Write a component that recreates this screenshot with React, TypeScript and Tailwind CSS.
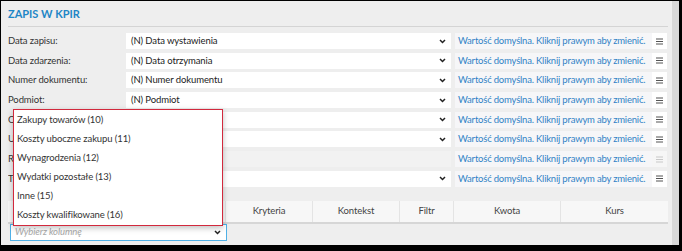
import React from "react";

const Chevron = ({ className = "" }: { className?: string }) => (
  <svg width="7" height="5" viewBox="0 0 7 5" className={className}>
    <path d="M1 1 L3.5 3.5 L6 1" fill="none" stroke="#222" strokeWidth="1.5" />
  </svg>
);

const Burger = ({ light = false }: { light?: boolean }) => (
  <svg width="7" height="7" viewBox="0 0 7 7">
    <rect x="0" y="0.5" width="7" height="1" fill={light ? "#c8c8c8" : "#555"} />
    <rect x="0" y="3" width="7" height="1" fill={light ? "#c8c8c8" : "#555"} />
    <rect x="0" y="5.5" width="7" height="1" fill={light ? "#c8c8c8" : "#555"} />
  </svg>
);

const rows = [
  { label: "Data zapisu:", value: "(N) Data wystawienia" },
  { label: "Data zdarzenia:", value: "(N) Data otrzymania" },
  { label: "Numer dokumentu:", value: "(N) Numer dokumentu" },
  { label: "Podmiot:", value: "(N) Podmiot" },
  { label: "Opis zdarzenia:", value: "" },
  { label: "Uwagi:", value: "" },
  { label: "Rodzaj:", value: "", disabled: true },
  { label: "Typ:", value: "" },
];

const items = [
  "Zakupy towarów (10)",
  "Koszty uboczne zakupu (11)",
  "Wynagrodzenia (12)",
  "Wydatki pozostałe (13)",
  "Inne (15)",
  "Koszty kwalifikowane (16)",
];

export default function App() {
  return (
    <div
      className="relative w-[682px] h-[251px] bg-black overflow-hidden"
      style={{ fontFamily: "Lato, 'Open Sans', sans-serif" }}
    >
      <div className="ml-[1px] mt-[1px] w-[678px] h-[244px] flex">
        <div className="w-[671px] shrink-0 h-full bg-[#eeeeee] pl-[7px] pr-[4px]">
          <div className="h-[26px] flex items-center pt-[2px] border-b border-[#d4d4d4]">
            <span className="text-[11px] font-bold text-[#1e86c6]">ZAPIS W KPIR</span>
          </div>
          <div className="pt-[6px] flex flex-col">
            {rows.map((r, i) => (
              <div key={i} className="h-[19.7px] flex items-start">
                <div className="w-[118px] shrink-0 h-[16px] flex items-center text-[9.5px] tracking-[-0.1px] text-[#333] whitespace-nowrap overflow-hidden">
                  {r.label}
                </div>
                <div
                  className={`w-[325px] shrink-0 h-[16px] flex items-center justify-between pl-[5px] pr-[5px] text-[9.5px] tracking-[-0.1px] text-[#222] ${
                    r.disabled ? "bg-[#f2f2f2]" : "bg-white"
                  }`}
                >
                  <span>{r.value}</span>
                  {!r.disabled && <Chevron />}
                </div>
                <div className="ml-[4px] w-[197px] shrink-0 h-[16px] flex items-center pl-[3px] bg-[#f6f6f8] text-[9.5px] tracking-[-0.2px] text-[#3183c6] whitespace-nowrap overflow-hidden">
                  Wartość domyślna. Kliknij prawym aby zmienić.
                </div>
                <div className={`w-[15px] shrink-0 h-[16px] flex items-center justify-center ${r.disabled ? "bg-[#f6f6f6]" : "bg-white"}`}>
                  <Burger light={r.disabled} />
                </div>
              </div>
            ))}
          </div>
          <div className="mt-[10px] h-[23px] flex bg-[#f7f7f7] border-b-2 border-[#d6d6d6] text-[9.5px] tracking-[-0.1px] text-[#444]">
            <div className="w-[218px] border-r border-[#e4e4e4]" />
            <div className="w-[87px] flex items-center justify-center border-r border-[#e4e4e4]">Kryteria</div>
            <div className="w-[87px] flex items-center justify-center border-r border-[#e4e4e4]">Kontekst</div>
            <div className="w-[54px] flex items-center justify-center border-r border-[#e4e4e4]">Filtr</div>
            <div className="w-[107px] flex items-center justify-center border-r border-[#e4e4e4]">Kwota</div>
            <div className="flex-1 flex items-center justify-center">Kurs</div>
          </div>
          <div className="ml-[2px] w-[217px] h-[17px] bg-white border border-[#4fb0e6] flex items-center justify-between pl-[4px] pr-[5px]">
            <span className="text-[9.5px] tracking-[-0.1px] italic text-[#a8a8a8]">Wybierz kolumnę</span>
            <Chevron />
          </div>
        </div>
        <div className="w-[7px] shrink-0 h-full bg-[#d8d8d8]" />
      </div>
      <div className="absolute left-[13px] top-[109px] w-[210px] h-[117px] bg-white border border-[#d2293d] shadow-[0_2px_6px_rgba(0,0,0,0.25)] pt-[1px] flex flex-col">
        {items.map((t) => (
          <div key={t} className="h-[19.3px] flex items-center pl-[3px] text-[9.5px] tracking-[-0.1px] text-[#333]">
            {t}
          </div>
        ))}
      </div>
    </div>
  );
}
